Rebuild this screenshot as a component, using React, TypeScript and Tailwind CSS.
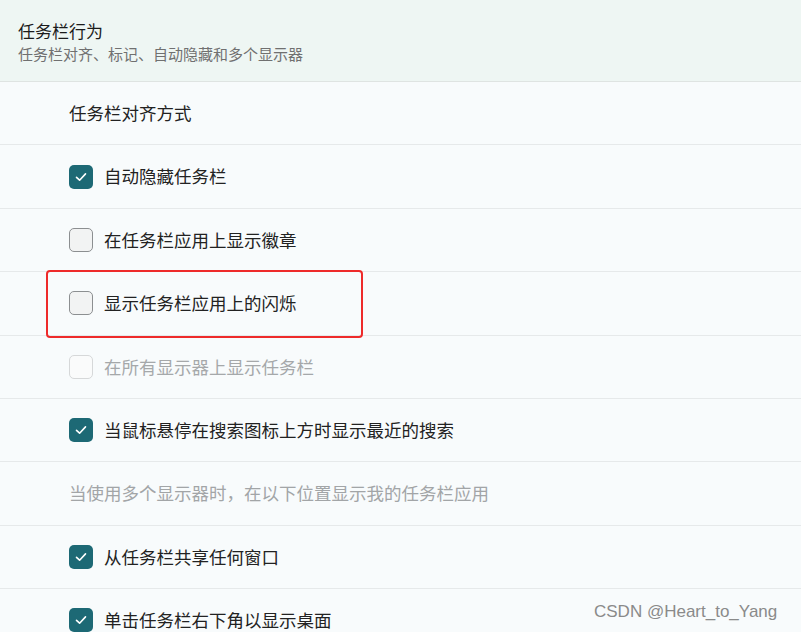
const font = { fontFamily: '"Noto Sans CJK SC", "Noto Sans", sans-serif' }

type Row =
  | { kind: 'label'; text: string; muted?: boolean }
  | { kind: 'check'; text: string; checked?: boolean; disabled?: boolean; highlight?: boolean }

const rows: Row[] = [
  { kind: 'label', text: '任务栏对齐方式' },
  { kind: 'check', text: '自动隐藏任务栏', checked: true },
  { kind: 'check', text: '在任务栏应用上显示徽章' },
  { kind: 'check', text: '显示任务栏应用上的闪烁', highlight: true },
  { kind: 'check', text: '在所有显示器上显示任务栏', disabled: true },
  { kind: 'check', text: '当鼠标悬停在搜索图标上方时显示最近的搜索', checked: true },
  { kind: 'label', text: '当使用多个显示器时，在以下位置显示我的任务栏应用', muted: true },
  { kind: 'check', text: '从任务栏共享任何窗口', checked: true },
  { kind: 'check', text: '单击任务栏右下角以显示桌面', checked: true },
]

function Checkbox({ checked, disabled }: { checked?: boolean; disabled?: boolean }) {
  if (checked) {
    return (
      <div className="w-6 h-6 rounded-[5px] bg-[#1d6975] flex items-center justify-center shrink-0">
        <svg width="14" height="14" viewBox="0 0 14 14" fill="none">
          <path d="M2.5 7.3 L5.6 10.2 L11.5 3.9" stroke="white" strokeWidth="1.6" strokeLinecap="round" strokeLinejoin="round" />
        </svg>
      </div>
    )
  }
  return (
    <div
      className={`w-6 h-6 rounded-[5px] border shrink-0 ${
        disabled ? 'border-[#d6d8d9] bg-[#fafbfb]' : 'border-[#8c8f91] bg-[#f2f3f3]'
      }`}
    />
  )
}

export default function App() {
  return (
    <div className="relative w-[801px] h-[632px] overflow-hidden bg-[#f8fbfc]" style={font}>
      {/* Section header */}
      <div className="h-[82px] bg-[#eef6f3] border-b border-[#dfe4e2] pl-[18px] pt-[18px]">
        <div className="text-[17px] leading-[26px] text-[#1b1b1b]">任务栏行为</div>
        <div className="text-[15px] leading-[20px] text-[#707070]">任务栏对齐、标记、自动隐藏和多个显示器</div>
      </div>

      {/* Options */}
      {rows.map((row, i) => (
        <div key={i} className="h-[63.4px] border-b border-[#e6e9ea] flex items-center pl-[69px]">
          {row.kind === 'label' ? (
            <span className={`text-[17.5px] ${row.muted ? 'text-[#a2a5a7]' : 'text-[#222222]'}`}>{row.text}</span>
          ) : (
            <div className="relative flex items-center gap-[11px]">
              {row.highlight && (
                <div className="absolute left-[-23px] top-[-20px] w-[317px] h-[68px] border-[2.5px] border-[#ee2a2a] rounded-[4px]" />
              )}
              <Checkbox checked={row.checked} disabled={row.disabled} />
              <span className={`text-[17.5px] ${row.disabled ? 'text-[#a5a8aa]' : 'text-[#222222]'}`}>{row.text}</span>
            </div>
          )}
        </div>
      ))}

      {/* Watermark */}
      <div
        className="absolute left-[594px] top-[601px] text-[17px] leading-[22px] text-[#8a8a8a]"
        style={{ fontFamily: '"Liberation Sans", Arial, sans-serif' }}
      >
        CSDN @Heart_to_Yang
      </div>
    </div>
  )
}
